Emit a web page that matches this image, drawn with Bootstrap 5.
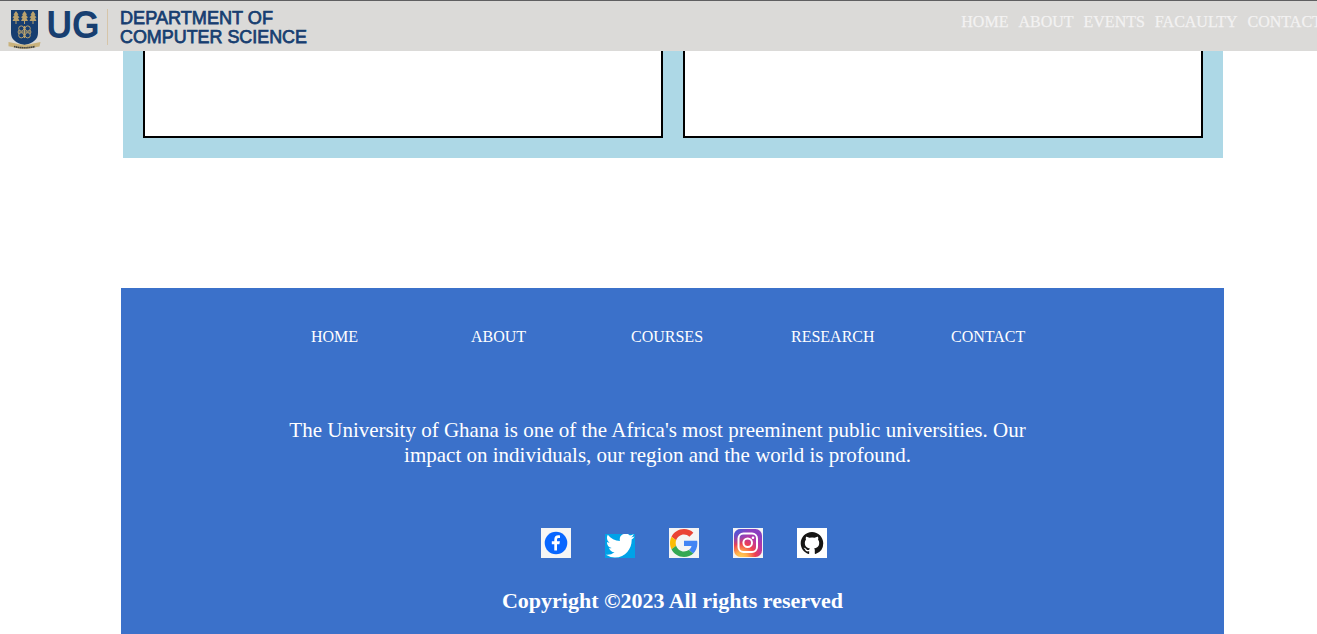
<!DOCTYPE html>
<html lang="en">
<head>
<meta charset="utf-8">
<meta name="viewport" content="width=device-width, initial-scale=1">
<title>Department of Computer Science</title>
<link href="https://cdn.jsdelivr.net/npm/bootstrap@5.3.0/dist/css/bootstrap.min.css" rel="stylesheet">
<style>
  body { font-family: "Liberation Serif", "Times New Roman", serif; font-size: 16px; line-height: 18px; color: #000; background: #fff; overflow: hidden; height: 634px; }
  a { text-decoration: none; }
  .topbar { height: 51px; background: #dbdad8; border-top: 1px solid #5f5f61; padding: 0; overflow: hidden; }
  .topbar svg { display: block; }
  .topmenu { gap: 10px; padding-top: 12px; width: 355.700px; white-space: nowrap; }
  .topmenu a { color: #f3f2f2; -webkit-text-stroke: .25px #f3f2f2; }
  .panels { width: 1100px; height: 107px; margin-left: 123px; padding: 0 20px 20px; gap: 20px; background: #add8e6; }
  .panel { border: 2px solid #000; border-top: 0; background: #fff; }
  .site-footer { width: 1103px; height: 346px; margin: 130px 0 0 121px; background: #3b71ca; color: #fff; overflow: hidden; }
  .footmenu { padding: 40px 0 0 190px; }
  .footmenu a { width: 160px; color: #fff; }
  .about { width: 760px; margin: 72px 0 0 156.500px; font-size: 21px; line-height: 25px; }
  .social { margin: 60px 0 0 420px; gap: 34px; }
  .social svg { display: block; }
  .copy { margin: 30px 0 0; font-size: 22px; line-height: 25px; font-weight: 700; }
</style>
</head>
<body>
<nav class="navbar topbar flex-nowrap align-items-start justify-content-between">
  <a href="#" aria-label="University of Ghana, Department of Computer Science">
    <svg width="320" height="50" viewBox="0 1 320 50">
      <path d="M11 10h27v23q0 9-13.500 12Q11 42 11 33z" fill="#173e70"/>
      <g stroke="#b9a16d" fill="#b9a16d">
        <path d="M16 12v12M24.500 12v12M33 12v12" stroke-width="1"/>
        <path d="M16 11l2.500 3.500-1 .5 2 2.500-1.500.5 1.500 3h-7l1.500-3-1.500-.5 2-2.500-1-.5zM24.500 11l2.500 3.500-1 .5 2 2.500-1.500.5 1.500 3h-7l1.500-3-1.500-.5 2-2.500-1-.5zM33 11l2.500 3.500-1 .5 2 2.500-1.500.5 1.500 3h-7l1.500-3-1.500-.5 2-2.500-1-.5z" stroke="none"/>
        <g fill="none" stroke-width="1">
          <path d="M24.500 26v12M19 32h11"/>
          <circle cx="21.300" cy="28.500" r="2.600"/><circle cx="27.700" cy="28.500" r="2.600"/>
          <circle cx="21.300" cy="35.300" r="2.600"/><circle cx="27.700" cy="35.300" r="2.600"/>
          <path d="M19 30q-2 2 0 4M30 30q2 2 0 4"/>
        </g>
      </g>
      <path d="M8.500 42l5 1q11 3.500 22 0l5-1-1 4.500-3 .5q-12 4-24 0l-4-.8z" fill="#c9b27c"/>
      <path d="M14 46.500q10.500 2.500 21 0" fill="none" stroke="#3f4345" stroke-width="1.600" stroke-dasharray="1.500 .4"/>
      <g fill="#173e70" font-family="Liberation Sans, Arial, sans-serif" font-weight="700">
        <text x="46.600" y="37.700" font-size="38.500" textLength="53" lengthAdjust="spacingAndGlyphs">UG</text>
        <text x="120" y="24" font-size="18.500" font-weight="400" stroke="#173e70" stroke-width=".75" textLength="153" lengthAdjust="spacingAndGlyphs">DEPARTMENT OF</text>
        <text x="120" y="43.400" font-size="18.500" font-weight="400" stroke="#173e70" stroke-width=".75" textLength="187" lengthAdjust="spacingAndGlyphs">COMPUTER SCIENCE</text>
      </g>
      <path d="M107.500 9v36" stroke="#d6c5a9"/>
    </svg>
  </a>
  <div class="topmenu d-flex">
    <a href="#">HOME</a><a href="#">ABOUT</a><a href="#">EVENTS</a><a href="#">FACAULTY</a><a href="#">CONTACT</a>
  </div>
</nav>

<main class="panels d-flex">
  <section class="panel flex-fill"></section>
  <section class="panel flex-fill"></section>
</main>

<footer class="site-footer">
  <div class="footmenu d-flex">
    <a href="#">HOME</a><a href="#">ABOUT</a><a href="#">COURSES</a><a href="#">RESEARCH</a><a href="#">CONTACT</a>
  </div>
  <p class="about text-center">The University of Ghana is one of the Africa's most preeminent public universities. Our impact on individuals, our region and the world is profound.</p>
  <div class="social d-flex align-items-end">
    <svg width="30" height="30" viewBox="0 0 30 30"><path fill="#f5f5f5" d="M0 0h30v30H0z"/><circle cx="15" cy="15" r="11.300" fill="#0866ff"/><path fill="#fff" d="M13.300 22.500V16.300h-2.500v-3h2.500v-1.600c0-3.200 1.500-4.500 4-4.500.8 0 1.300.1 1.700.2v2.700h-1.300c-1.300 0-1.700.6-1.700 1.700v1.500h2.900l-.5 3H16v6.200z"/></svg>
    <svg width="30" height="24" viewBox="0 0 30 24"><path fill="#00a2e8" d="M0 0h30v24H0z"/><path fill="#fff" transform="translate(.8 -.4) scale(1.200 1.220)" d="M23.950 2.370a10 10 0 0 1-2.820.77 4.960 4.960 0 0 0 2.160-2.720c-.95.560-2 .96-3.130 1.180a4.920 4.920 0 0 0-8.380 4.480C7.690 5.900 4.070 3.920 1.640.94a4.820 4.820 0 0 0-.67 2.480c0 1.710.87 3.210 2.190 4.100a4.900 4.900 0 0 1-2.230-.62v.06a4.920 4.920 0 0 0 3.950 4.830 5 5 0 0 1-2.210.08 4.940 4.940 0 0 0 4.600 3.420A9.870 9.870 0 0 1 0 17.330a14 14 0 0 0 7.550 2.210c9.050 0 14-7.500 14-13.980l-.02-.64a9.900 9.900 0 0 0 2.420-2.550z"/></svg>
    <svg width="30" height="30" viewBox="0 0 30 30"><path fill="#f4f4f4" d="M0 0h30v30H0z"/><g transform="translate(1 1) scale(.583)"><path fill="#ea4335" d="M24 9.500c3.540 0 6.710 1.220 9.210 3.600l6.850-6.850C35.900 2.380 30.470 0 24 0 14.620 0 6.510 5.380 2.560 13.220l7.980 6.190C12.430 13.720 17.740 9.500 24 9.500z"/><path fill="#4285f4" d="M46.980 24.550c0-1.570-.15-3.090-.38-4.550H24v9.020h12.940c-.58 2.960-2.260 5.480-4.780 7.180l7.730 6c4.510-4.180 7.090-10.360 7.090-17.650z"/><path fill="#fbbc05" d="M10.530 28.590c-.48-1.450-.76-2.990-.76-4.590s.27-3.140.76-4.590l-7.980-6.190C.92 16.460 0 20.120 0 24s.92 7.540 2.560 10.780z"/><path fill="#34a853" d="M24 48c6.480 0 11.930-2.130 15.890-5.810l-7.730-6c-2.150 1.450-4.920 2.300-8.160 2.300-6.260 0-11.570-4.220-13.470-9.910l-7.980 6.190C6.510 42.620 14.620 48 24 48z"/></g></svg>
    <svg width="30" height="30" viewBox="0 0 30 30"><defs><radialGradient id="ig" cx=".25" cy="1.050" r="1.050"><stop offset="0" stop-color="#ffd45a"/><stop offset=".22" stop-color="#ffb04b"/><stop offset=".5" stop-color="#ee3f50"/><stop offset=".76" stop-color="#b936a4"/><stop offset="1" stop-color="#8a3fc0"/></radialGradient><radialGradient id="igb" cx="0" cy="0" r=".6"><stop offset="0" stop-color="#3f5bdb"/><stop offset="1" stop-color="#3f5bdb" stop-opacity="0"/></radialGradient></defs><path fill="#f4f4f4" d="M0 0h30v30H0z"/><rect x="1" y="1" width="28" height="28" rx="6.500" fill="url(#ig)"/><rect x="1" y="1" width="28" height="28" rx="6.500" fill="url(#igb)"/><g fill="none" stroke="#fff" stroke-width="2"><rect x="5.500" y="5.500" width="18.500" height="18.500" rx="5"/><circle cx="14.700" cy="14.800" r="4.300"/></g><circle cx="20" cy="9.700" r="1.300" fill="#fff"/></svg>
    <svg width="30" height="30" viewBox="0 0 30 30"><path fill="#fff" d="M0 0h30v30H0z"/><path fill="#161514" transform="translate(3.700 4) scale(1.410)" d="M8 0C3.580 0 0 3.580 0 8c0 3.540 2.290 6.530 5.470 7.590.4.070.55-.17.550-.38 0-.19-.01-.82-.01-1.490-2.010.37-2.530-.49-2.690-.94-.09-.23-.48-.94-.82-1.130-.28-.15-.68-.52-.01-.53.63-.01 1.080.58 1.230.82.72 1.210 1.870.87 2.330.66.070-.52.280-.87.510-1.070-1.780-.2-3.640-.89-3.640-3.950 0-.87.310-1.590.82-2.150-.08-.2-.36-1.020.08-2.120 0 0 .67-.21 2.200.82a7.600 7.600 0 0 1 4 0c1.530-1.040 2.200-.82 2.200-.82.44 1.100.16 1.920.08 2.120.51.560.82 1.270.82 2.150 0 3.070-1.870 3.750-3.650 3.950.29.250.54.730.54 1.480 0 1.070-.01 1.930-.01 2.200 0 .21.150.46.550.38A8.010 8.010 0 0 0 16 8c0-4.420-3.580-8-8-8z"/></svg>
  </div>
  <p class="copy text-center">Copyright ©2023 All rights reserved</p>
</footer>
<script src="https://cdn.jsdelivr.net/npm/bootstrap@5.3.0/dist/js/bootstrap.bundle.min.js"></script>
</body>
</html>
